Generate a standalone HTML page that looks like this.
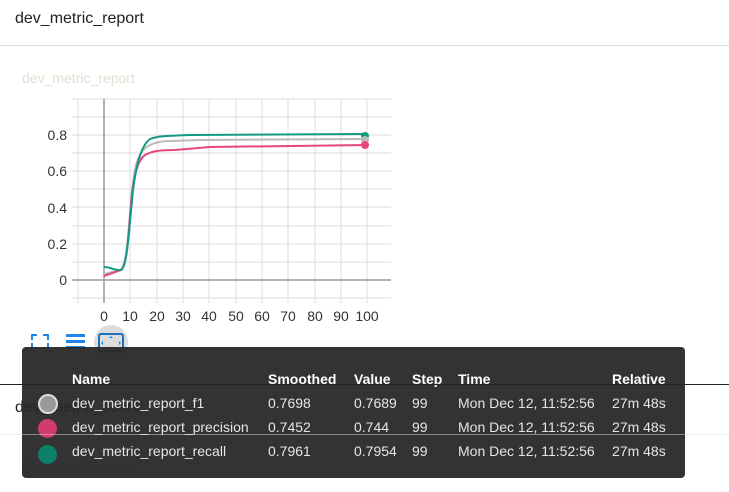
<!DOCTYPE html>
<html><head><meta charset="utf-8"><style>
html,body{margin:0;padding:0;width:729px;height:492px;overflow:hidden;background:#fff;font-family:"Liberation Sans",sans-serif;position:relative}
.h{position:absolute;left:15px;font-size:16px;color:#212121}
.line{position:absolute;left:0;width:729px;height:1px}
.tip{position:absolute;left:22px;top:347px;width:663px;height:131px;background:rgba(40,40,40,0.95);border-radius:4px;color:#e6e6e6;font-size:14px}
.tip table{position:absolute;left:50px;top:22px;border-collapse:collapse}
.tip td,.tip th{padding:0;height:24px;text-align:left;white-space:nowrap}
.tip th{font-weight:bold;color:#fff;height:20px;padding-bottom:2px}
.dot{position:absolute;left:16px;width:19px;height:19px;border-radius:50%}
</style></head><body>
<div class="h" style="top:10px">dev_metric_report</div>
<div class="line" style="top:45px;background:#ddd"></div>
<div style="position:absolute;left:22px;top:70px;font-size:14px;color:#e5ded2">dev_metric_report</div>
<div class="h" style="top:399px">dev_metric_score</div>
<div style="position:absolute;left:22px;top:460px;font-size:14px;color:#999">dev_metric_score</div>
<svg style="position:absolute;left:0;top:0" width="729" height="492">
<g stroke="#ddd" stroke-width="1">
<line x1="78" y1="99" x2="78" y2="303"/><line x1="104" y1="99" x2="104" y2="303"/><line x1="130" y1="99" x2="130" y2="303"/><line x1="157" y1="99" x2="157" y2="303"/><line x1="183" y1="99" x2="183" y2="303"/><line x1="209" y1="99" x2="209" y2="303"/><line x1="236" y1="99" x2="236" y2="303"/><line x1="262" y1="99" x2="262" y2="303"/><line x1="288" y1="99" x2="288" y2="303"/><line x1="315" y1="99" x2="315" y2="303"/><line x1="341" y1="99" x2="341" y2="303"/><line x1="367" y1="99" x2="367" y2="303"/>
<line x1="72" y1="99" x2="391" y2="99"/><line x1="72" y1="117" x2="391" y2="117"/><line x1="72" y1="135" x2="391" y2="135"/><line x1="72" y1="153" x2="391" y2="153"/><line x1="72" y1="171" x2="391" y2="171"/><line x1="72" y1="189" x2="391" y2="189"/><line x1="72" y1="207" x2="391" y2="207"/><line x1="72" y1="226" x2="391" y2="226"/><line x1="72" y1="244" x2="391" y2="244"/><line x1="72" y1="262" x2="391" y2="262"/><line x1="72" y1="298" x2="391" y2="298"/>
</g>
<line x1="104" y1="99" x2="104" y2="303" stroke="#999" stroke-width="1.5"/>
<line x1="72" y1="280" x2="391" y2="280" stroke="#999" stroke-width="1.5"/>
<g font-size="14" fill="#333" text-anchor="end">
<text x="67" y="140">0.8</text><text x="67" y="176">0.6</text><text x="67" y="249">0.2</text><text x="67" y="213">0.4</text><text x="67" y="285">0</text></g>
<g font-size="14" fill="#333" text-anchor="middle">
<text x="104" y="321">0</text><text x="130" y="321">10</text><text x="157" y="321">20</text><text x="183" y="321">30</text><text x="209" y="321">40</text><text x="236" y="321">50</text><text x="262" y="321">60</text><text x="288" y="321">70</text><text x="315" y="321">80</text><text x="341" y="321">90</text><text x="367" y="321">100</text></g>
<g fill="none" stroke-width="2">
<path d="M104,274 L120,270 C126,268 128,240 131,200 C134,165 138,155 145,148 C152,143 160,141 170,141 L200,140 L367,139" stroke="#bbb"/>
<path d="M104,276 L121,270 C127,266 128,240 131,205 C134,172 138,160 145,155 C152,151 160,150 175,150 L210,147 L367,145" stroke="#e8467c"/>
<path d="M104,267 C110,267 116,271 121,270 C127,268 129,230 133,190 C137,160 142,145 150,139 C158,136 165,136 190,135 L367,134" stroke="#119a84"/>
</g>
<circle cx="365" cy="136" r="4" fill="#119a84"/><circle cx="365" cy="140" r="4" fill="#bbb"/><circle cx="365" cy="145" r="4" fill="#e8467c"/>
<g stroke="#1e88e5" stroke-width="2" fill="none"><path d="M32,340v-5h5M43,335h5v5M48,343v5h-5M37,348h-5v-5"/></g>
<g fill="#1e88e5"><rect x="66" y="334" width="19" height="3"/><rect x="66" y="340" width="19" height="3"/><rect x="66" y="346" width="19" height="3"/></g>
<circle cx="111" cy="342" r="17" fill="#ddd"/>
<rect x="99" y="334" width="24" height="17" rx="2" fill="none" stroke="#1e6fb5" stroke-width="2"/>
<g fill="#1e88e5"><path d="M109,338h4l-2,-2z M109,347h4l-2,2z M103,341v4l-2,-2z M119,341v4l2,-2z"/></g>
</svg>
<div class="tip">
<div class="dot" style="top:47px;background:#999;border:2px solid #ddd;width:16px;height:16px"></div>
<div class="dot" style="top:72px;background:#d33a6d"></div>
<div class="dot" style="top:98px;background:#0f7f6c"></div>
<table>
<tr><th style="width:196px">Name</th><th style="width:86px">Smoothed</th><th style="width:58px">Value</th><th style="width:46px">Step</th><th style="width:154px">Time</th><th>Relative</th></tr>
<tr><td>dev_metric_report_f1</td><td>0.7698</td><td>0.7689</td><td>99</td><td>Mon Dec 12, 11:52:56</td><td>27m 48s</td></tr>
<tr><td>dev_metric_report_precision</td><td>0.7452</td><td>0.744</td><td>99</td><td>Mon Dec 12, 11:52:56</td><td>27m 48s</td></tr>
<tr><td>dev_metric_report_recall</td><td>0.7961</td><td>0.7954</td><td>99</td><td>Mon Dec 12, 11:52:56</td><td>27m 48s</td></tr>
</table></div>
<div class="line" style="top:384px;background:#222"></div>
<div class="line" style="top:434px;background:rgba(220,220,220,0.5)"></div>
</body></html>
